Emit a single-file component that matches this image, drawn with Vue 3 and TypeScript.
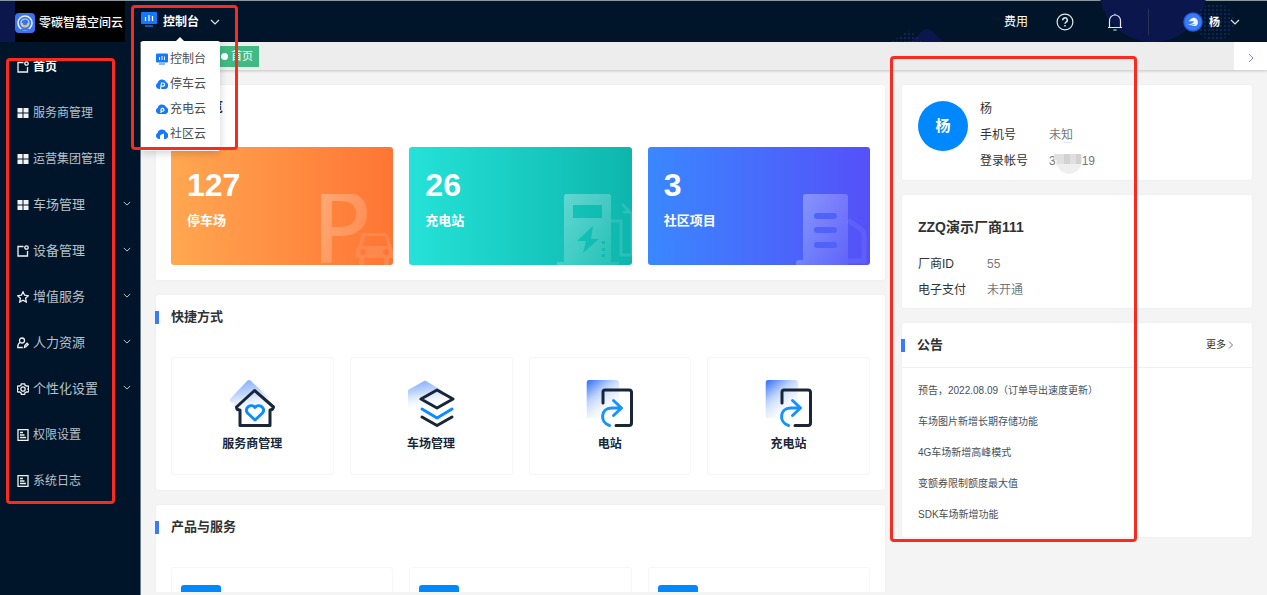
<script setup lang="ts">
import { ref } from 'vue'

interface NavItem { label: string; icon: string; large?: boolean; expandable?: boolean; active?: boolean }

const navItems: NavItem[] = [
  { label: '首页', icon: 'page', active: true },
  { label: '服务商管理', icon: 'grid' },
  { label: '运营集团管理', icon: 'grid' },
  { label: '车场管理', icon: 'grid', large: true, expandable: true },
  { label: '设备管理', icon: 'page', large: true, expandable: true },
  { label: '增值服务', icon: 'star', large: true, expandable: true },
  { label: '人力资源', icon: 'user', large: true, expandable: true },
  { label: '个性化设置', icon: 'gear', large: true, expandable: true },
  { label: '权限设置', icon: 'doc' },
  { label: '系统日志', icon: 'doc' },
]

const platforms = [
  { label: '控制台', icon: 'monitor' },
  { label: '停车云', icon: 'parking' },
  { label: '充电云', icon: 'charge' },
  { label: '社区云', icon: 'community' },
]

const stats = [
  { value: 127, label: '停车场', kind: 'parking' },
  { value: 26, label: '充电站', kind: 'charging' },
  { value: 3, label: '社区项目', kind: 'community' },
]

const shortcuts = [
  { label: '服务商管理', icon: 'house' },
  { label: '车场管理', icon: 'layers' },
  { label: '电站', icon: 'share' },
  { label: '充电站', icon: 'share' },
]

const notices = [
  '预告，2022.08.09（订单导出速度更新）',
  '车场图片新增长期存储功能',
  '4G车场新增高峰模式',
  '变额券限制额度最大值',
  'SDK车场新增功能',
]

const menuOpen = ref(true)
</script>

<template>
  <div class="app">
    <header class="header">
      <svg class="decor" viewBox="0 0 380 42" aria-hidden="true">
        <defs>
          <pattern id="dots" width="4" height="4" patternUnits="userSpaceOnUse">
            <circle cx="2" cy="2" r="1" fill="#12296b" />
          </pattern>
        </defs>
        <circle cx="266" cy="-12" r="54" fill="#0b174c" />
        <path d="M22 42C32 38 33 29 40 29S49 38 58 42Z" fill="#0b174c" />
        <path d="M4 42 22 30 36 42Z" fill="url(#dots)" />
        <circle cx="328" cy="22" r="19" fill="url(#dots)" />
      </svg>
      <div class="brand">
        <svg class="brand-logo" viewBox="0 0 20 20" aria-hidden="true">
          <rect width="20" height="20" rx="4" fill="#3b73ee" />
          <circle cx="10" cy="10" r="7" fill="none" stroke="#e8f0ff" stroke-width="1.6" />
          <circle cx="10" cy="10" r="4" fill="none" stroke="#c8d9fb" stroke-width="1.2" />
          <path d="M7 10a3 3 0 0 0 6 0" fill="none" stroke="#e9c84c" stroke-width="1.6" />
          <path d="M6 16.5h8" stroke="#3b73ee" stroke-width="2" />
        </svg>
        <span>零碳智慧空间云</span>
      </div>
      <div class="switcher">
        <button class="switch-button" type="button" :aria-expanded="menuOpen" @click="menuOpen = !menuOpen">
          <svg class="monitor" viewBox="0 0 16 15" aria-hidden="true">
            <rect width="16" height="12" rx="1" fill="#1677ff" />
            <path d="M4.500 5v4M8 3v6M11.500 4v5" stroke="#fff" stroke-width="1.2" />
            <path d="M4 14h8" stroke="#1677ff" stroke-width="1.4" />
          </svg>
          <span>控制台</span>
          <svg class="chevron" viewBox="0 0 10 6" aria-hidden="true"><path d="m1 1 4 4 4-4" /></svg>
        </button>
        <ul v-if="menuOpen" class="menu">
          <li v-for="p in platforms" :key="p.label">
            <a href="#">
              <svg viewBox="0 0 12 12" aria-hidden="true">
                <template v-if="p.icon === 'monitor'">
                  <rect y="0.500" width="12" height="9" rx="1" fill="#1677ff" />
                  <path d="M3.500 4v3M6 3v4M8.500 3.500V7" stroke="#fff" />
                  <path d="M3 11h6" stroke="#1677ff" />
                </template>
                <template v-else>
                  <path d="M3 11A3.200 3.200 0 0 1 1.600 5a4.600 4.600 0 0 1 8.700-.7A3.600 3.600 0 0 1 9.500 11Z" fill="#1677ff" />
                  <path v-if="p.icon === 'parking'" d="M4.500 11 5.500 5H7a1.600 1.600 0 0 1 0 3.200H5" fill="none" stroke="#fff" stroke-width="1.200" />
                  <path v-else-if="p.icon === 'charge'" d="M5 10V7a1.500 1.500 0 1 1 2 1.200L5 8.500" fill="none" stroke="#fff" stroke-width="1.200" />
                  <path v-else d="M4.500 12V7.500L7.500 6v6" fill="#fff" stroke="#fff" stroke-width="1" />
                </template>
              </svg>
              <span>{{ p.label }}</span>
            </a>
          </li>
        </ul>
      </div>
      <div class="tools">
        <a class="fee" href="#">费用</a>
        <button class="tool help" type="button" aria-label="帮助">
          <svg viewBox="0 0 18 18" fill="none" stroke="#e4e8ed" stroke-width="1.2">
            <circle cx="9" cy="9" r="7.900" />
            <path d="M6.700 7.300a2.300 2.300 0 1 1 3.200 2C9.200 9.700 9 10 9 10.800M9 12v1.400" stroke-width="1.500" />
          </svg>
        </button>
        <button class="tool bell" type="button" aria-label="通知">
          <svg viewBox="0 0 18 18" fill="none" stroke="#e4e8ed" stroke-width="1.2">
            <path d="M2 14.500h14M3.500 14.500V7.500a5.500 5.500 0 0 1 11 0v7M9 2V.800M7.300 17h3.400" />
          </svg>
        </button>
        <span class="divider"></span>
        <button class="account" type="button">
          <svg class="account-avatar" viewBox="0 0 20 20" aria-hidden="true">
            <circle cx="10" cy="10" r="9.800" fill="#2458cf" />
            <circle cx="10" cy="10" r="8.500" fill="#3a7bf7" />
            <path d="M5.500 9.500C8 5.500 12 4.500 14 7.500c2 3.500.5 6.500-2 6.500H5c3 0 6-.500 7-2-2 .800-5 .800-7 .500 3-.500 5.500-1.500 6-3-2-.500-4-.500-5.500 0Z" fill="#eef5ff" />
          </svg>
          <span>杨</span>
          <svg class="chevron" viewBox="0 0 10 6" aria-hidden="true"><path d="m1 1 4 4 4-4" /></svg>
        </button>
      </div>
    </header>

    <div class="body">
      <nav class="sidebar">
        <ul class="nav-list">
          <li v-for="item in navItems" :key="item.label">
            <a href="#" :class="{ large: item.large, active: item.active }">
              <svg class="nav-icon" viewBox="0 0 12 12" fill="none" stroke="currentColor" stroke-width="1.300" aria-hidden="true">
                <path v-if="item.icon === 'grid'" d="M.5 1h5v4.500h-5ZM6.500 1h5v4.500h-5ZM.5 6.500h5V11h-5ZM6.500 6.500h5V11h-5Z" fill="currentColor" stroke="none" />
                <template v-else-if="item.icon === 'page'">
                  <path d="M6.500 1.500H1v9.500h9.500V6" />
                  <circle cx="9.500" cy="2.500" r="1.700" />
                </template>
                <path v-else-if="item.icon === 'star'" d="m6 .8 1.600 3.400 3.700.5-2.700 2.600.7 3.700L6 9.200 2.700 11l.7-3.700L.7 4.700l3.700-.5Z" />
                <template v-else-if="item.icon === 'user'">
                  <circle cx="5" cy="3.500" r="2.500" />
                  <path d="M3 5.500C1 6.500.7 8 .8 10.500h5M7.500 10.500l.3-2 2.200-2.300 1.200 1.200-2.200 2.400Z" />
                </template>
                <template v-else-if="item.icon === 'gear'">
                  <path d="m4.400.8-.5 1.500-1.500.8L.8 3 .1 5l1 1-1 1.200.9 1.900 1.500-.1 1.400.8.5 1.500h3.200l.5-1.500L9.500 9l1.500.1.9-1.900-1-1.200 1-1-.7-2-1.600.1-1.500-.8L7.600.8Z" />
                  <circle cx="6" cy="6" r="2.200" />
                </template>
                <path v-else d="M1 .7h10v10.600H1ZM3 3.500h3M3 6h4.500M3 8.500h6" />
              </svg>
              <span>{{ item.label }}</span>
              <svg v-if="item.expandable" class="chevron arrow" viewBox="0 0 10 6" aria-hidden="true"><path d="m1 1 4 4 4-4" /></svg>
            </a>
          </li>
        </ul>
      </nav>

      <main class="main">
        <div class="tabs">
          <a class="tab" href="#"><i></i>首页</a>
          <button class="tabs-next" type="button" aria-label="下一页">
            <svg viewBox="0 0 6 10"><path d="m1 1 4 4-4 4" fill="none" stroke="#6d8df5" /></svg>
          </button>
        </div>

        <div class="content">
          <div class="column">
            <section class="card">
              <h2 class="card-title">数据概览</h2>
              <div class="grid three">
                <a v-for="s in stats" :key="s.label" href="#" class="stat" :class="s.kind">
                  <strong>{{ s.value }}</strong>
                  <span>{{ s.label }}</span>
                  <svg class="stat-art" viewBox="0 0 80 71" aria-hidden="true">
                    <defs>
                      <linearGradient :id="'art-' + s.kind" x1="0" y1="0" x2="1" y2="1">
                        <stop offset="0" stop-color="#fff" stop-opacity=".34" />
                        <stop offset="1" stop-color="#fff" stop-opacity=".08" />
                      </linearGradient>
                    </defs>
                    <g v-if="s.kind === 'parking'">
                      <text class="art-letter" x="-1" y="69" fill="url(#art-parking)">P</text>
                      <path d="M50 39h21q3 0 4 3l3 9q2 3 2 7v6h-4v7h-5v-7H51v7h-5v-7h-3v-7q0-4 3-6l2-9q0-3 2-3ZM52 42l-3 10h26l-3-10ZM50 55a3 3 0 1 0 .1 6 3 3 0 0 0-.1-6ZM73 55a3 3 0 1 0 .1 6 3 3 0 0 0-.1-6Z" fill="#ff8f58" fill-opacity=".7" fill-rule="evenodd" />
                    </g>
                    <g v-else-if="s.kind === 'charging'" fill="url(#art-charging)">
                      <path d="M14 0h43q2 0 2 2v66h8v3H5v-3h7V2q0-2 2-2ZM21 11v13h29V11ZM41 32 25 47h9l-3 12 16-14h-8ZM50 47v3h3v-3ZM50 54v3h3v-3ZM50 60v3h3v-3Z" fill-rule="evenodd" />
                      <path d="M59 27h10v34h11V20l-10-10M71 18h8" fill="none" stroke="#fff" stroke-opacity=".12" stroke-width="3" />
                    </g>
                    <g v-else>
                      <path d="M16 0h39q3 0 3 3v68H6v-2q0-3 3-3h4V3q0-3 3-3Z" fill="url(#art-community)" />
                      <path d="M58 26 72 36q2 2 2 4v27H58" fill="none" stroke="#fff" stroke-opacity=".07" stroke-width="5" />
                      <path d="M27 22h17M27 36h17M27 51h17" stroke="#4f63fa" stroke-width="6" stroke-linecap="round" />
                    </g>
                  </svg>
                </a>
              </div>
            </section>

            <section class="card">
              <h2 class="card-title marked">快捷方式</h2>
              <div class="grid four">
                <a v-for="(t, i) in shortcuts" :key="t.label" href="#" class="tile">
                  <svg viewBox="0 0 48 48" fill="none" stroke="#182637" stroke-width="3" stroke-linecap="round" stroke-linejoin="round" aria-hidden="true">
                    <defs>
                      <linearGradient :id="'tile-' + i" x1="0" y1="0" :x2="t.icon === 'share' ? 0.7 : 0.2" y2="1">
                        <stop offset="0" :stop-color="t.icon === 'share' ? '#2f6df6' : '#7aa9fb'" />
                        <stop offset=".4" stop-color="#bcd3fd" />
                        <stop offset="1" stop-color="#fff" stop-opacity="0" />
                      </linearGradient>
                    </defs>
                    <template v-if="t.icon === 'house'">
                      <path d="M19 1q2-2 4 0l17 16q2 3-1 4v17H6V23H4q-4-2-1-5Z" :fill="`url(#tile-${i})`" stroke="none" />
                      <path d="M26.500 10.500 8.500 27q0 3 3.500 3v15.500h30V30q3 0 3.500-3Z" />
                      <path d="M27 40 19.500 33c-4-5 3.500-10 7.500-5.500 4-4.500 11.500.5 7.500 5.500Z" stroke="#0b8cff" />
                    </template>
                    <template v-else-if="t.icon === 'layers'">
                      <path d="M1 10 18 .5 36 11v20H1Z" :fill="`url(#tile-${i})`" stroke="none" />
                      <path d="m14 19 16-9 16 9-16 9Z" />
                      <path d="m15 29 15 9 15-9" stroke="#0b8cff" />
                      <path d="m15 37 15 8.500L45 37" />
                    </template>
                    <template v-else>
                      <path d="M3 0h27q3 0 3 3v35H.7V3Q.7 0 3 0Z" :fill="`url(#tile-${i})`" stroke="none" />
                      <path d="M17 23V12q0-2 2-2h24q2.500 0 2.500 2.500V43q0 2.500-2.500 2.500H30" />
                      <path d="M23.500 45.500c-10-3-9-17.500 2-17.500H35M27.500 20.500 35.500 28l-8 7.500" stroke="#1593ff" />
                    </template>
                  </svg>
                  <span>{{ t.label }}</span>
                </a>
              </div>
            </section>

            <section class="card">
              <h2 class="card-title marked">产品与服务</h2>
              <div class="grid three">
                <div v-for="n in 3" :key="n" class="product"><i></i></div>
              </div>
            </section>
          </div>

          <aside class="column">
            <section class="card profile">
              <div class="avatar">杨</div>
              <div>
                <div class="name">杨</div>
                <dl class="rows">
                  <dt>手机号</dt><dd>未知</dd>
                  <dt>登录帐号</dt>
                  <dd class="masked">
                    <span>3</span>
                    <svg viewBox="0 0 30 32" aria-hidden="true">
                      <path d="M9 1q6-3 11 0Z" fill="#e4e4e5" />
                      <path d="M2 12h27v8q0 3-1 4-5 8-12 8T4 24Q0 18 2 12Z" fill="#efeff0" />
                      <path d="M1 12h27v10H4V18H1Z" fill="#e0e0e1" />
                      <path d="M11 12h6v10h-6ZM23 12h5v10h-5Z" fill="#d2d2d4" />
                    </svg>
                    <span>19</span>
                  </dd>
                </dl>
              </div>
            </section>

            <section class="card vendor">
              <h2>ZZQ演示厂商111</h2>
              <dl class="rows">
                <dt>厂商ID</dt><dd>55</dd>
                <dt>电子支付</dt><dd>未开通</dd>
              </dl>
            </section>

            <section class="card">
              <div class="notice-head">
                <h2 class="card-title marked">公告</h2>
                <a class="more" href="#">更多<svg viewBox="0 0 6 10" aria-hidden="true"><path d="m1 1.500 3.500 3.500L1 8.500" fill="none" stroke="#6b7280" /></svg></a>
              </div>
              <ul class="notices">
                <li v-for="n in notices" :key="n"><a href="#">{{ n }}</a></li>
              </ul>
            </section>
          </aside>
        </div>
      </main>
    </div>

    <div class="highlight highlight-nav"></div>
    <div class="highlight highlight-menu"></div>
    <div class="highlight highlight-side"></div>
  </div>
</template>

<style>
body { margin: 0; }
</style>

<style scoped>
.app, .app * { box-sizing: border-box; }
.app {
  position: relative;
  display: flex;
  flex-direction: column;
  height: 100vh;
  overflow: hidden;
  background: #f4f4f5;
  color: #303133;
  font: 12px/16px "Liberation Sans", "Noto Sans CJK SC", sans-serif;
}
a { color: inherit; text-decoration: none; }
button { padding: 0; border: 0; background: none; color: inherit; font: inherit; cursor: pointer; }
ul, dl, dd, h2 { margin: 0; padding: 0; list-style: none; }
svg { display: block; flex: none; }
.chevron { width: 10px; height: 6px; fill: none; stroke: #dfe4ea; stroke-width: 1.2; }

.header {
  position: relative;
  z-index: 2;
  display: flex;
  flex: none;
  height: 42px;
  padding-left: 15px;
  border-top: 1px solid #8b979f;
  background: linear-gradient(90deg, #0b174c 15px, #001529 15px);
  color: #fff;
}
.decor { position: absolute; top: -1px; right: 0; width: 380px; height: 42px; }
.brand { display: flex; align-items: center; gap: 4px; width: 110px; padding-top: 2px; background: #000; font-weight: 500; white-space: nowrap; }
.brand-logo { width: 20px; height: 20px; }
.switcher { position: relative; display: flex; margin-left: 16px; }
.switch-button { display: flex; align-items: center; gap: 6px; font-weight: 700; }
.switch-button .chevron { margin-left: 5px; }
.monitor { width: 16px; height: 15px; margin-bottom: 4px; }
.menu {
  position: absolute;
  top: 40px;
  left: 0;
  width: 79px;
  padding: 5px 0;
  border-radius: 2px;
  background: #fff;
  box-shadow: 0 2px 8px rgba(0, 0, 0, .18);
  color: #4a4d52;
}
.menu::before { content: ""; position: absolute; top: -4px; left: 35px; border: 4px solid transparent; border-top: 0; border-bottom-color: #fff; }
.menu a { display: flex; align-items: center; gap: 2px; height: 25px; padding-left: 15px; }
.menu svg { width: 12px; height: 12px; }

.tools { position: relative; display: flex; align-items: center; margin-left: auto; padding-right: 27px; }
.fee { margin-right: 28px; }
.tool svg { width: 18px; height: 18px; }
.help { margin-right: 32px; }
.bell { margin-right: 24px; }
.divider { width: 1px; height: 26px; margin-right: 34px; background: #2b3457; }
.account { display: flex; align-items: center; font-size: 11px; font-weight: 700; }
.account-avatar { width: 20px; height: 20px; margin-right: 6px; }
.account .chevron { margin-left: 10px; }

.body { display: flex; flex: 1; min-height: 0; }
.sidebar { flex: none; width: 141px; padding-top: 19px; border-right: 1px solid #6d7a88; background: #001529; color: #b9c1c9; }
.nav-list { height: 100%; overflow: hidden; }
.nav-list li:first-child { margin-top: -17px; }
.nav-list a { display: flex; align-items: center; gap: 4px; height: 46px; padding: 0 9px 0 17px; white-space: nowrap; }
.nav-list a.large { font-size: 13px; }
.nav-list a.active { color: #fff; font-weight: 700; }
.nav-icon { width: 12px; height: 12px; color: #f1f3f5; }
.arrow { width: 8px; height: 5px; margin-bottom: 3px; margin-left: auto; stroke: #c6cdd4; }

.main { display: flex; flex: 1; flex-direction: column; min-width: 0; padding-bottom: 3px; }
.tabs { display: flex; flex: none; align-items: center; height: 28px; padding-left: 73px; background: #ededed; box-shadow: 0 1px 3px rgba(0, 0, 0, .2); }
.tab { display: flex; align-items: center; gap: 3px; height: 21px; padding: 0 6px 0 7px; background: #42b983; color: #fff; font-size: 11px; }
.tab i { width: 7px; height: 7px; border-radius: 50%; background: #fff; }
.tabs-next { display: flex; align-items: center; justify-content: center; width: 33px; height: 28px; padding-top: 4px; margin-left: auto; background: #fff; }
.tabs-next svg { width: 6px; height: 10px; }

.content { display: grid; flex: 1; grid-template-columns: 731fr 352fr; gap: 15px; min-height: 0; padding: 14px 14px 0; overflow: hidden; }
.column { display: flex; flex-direction: column; gap: 13px; min-width: 0; }
.card { flex: none; border: 1px solid #f0f0f3; border-radius: 3px; background: #fff; }
.card-title { position: relative; padding-left: 15px; font-size: 13px; font-weight: 700; line-height: 44px; }
.marked::before { content: ""; position: absolute; top: 16px; left: -1px; width: 4px; height: 13px; background: #3a7afe; }
.grid { display: grid; gap: 16px; padding: 18px 15px 15px; }
.three { grid-template-columns: repeat(3, 1fr); }
.four { grid-template-columns: repeat(4, 1fr); }

.stat { position: relative; display: flex; flex-direction: column; height: 118px; padding: 20px 16px; border-radius: 3px; color: #fff; overflow: hidden; }
.stat strong { font-size: 32px; line-height: 36px; }
.stat span { margin-top: 8px; font-size: 13px; font-weight: 700; line-height: 20px; }
.stat-art { position: absolute; right: 0; bottom: 0; width: 80px; height: 71px; }
.art-letter { font: 500 98px "Noto Sans", sans-serif; }
.parking { background: linear-gradient(90deg, #ffa751, #ff7534); }
.charging { background: linear-gradient(90deg, #25e2d8, #0db6ac); }
.community { background: linear-gradient(90deg, #3a88ff, #5550f8); }

.tile { display: flex; flex-direction: column; align-items: center; height: 118px; padding-top: 22px; border: 1px solid #f6f6f8; border-radius: 3px; color: #182637; font-weight: 700; }
.tile svg { width: 48px; height: 48px; margin-bottom: 8px; }
.product { height: 118px; padding: 17px 9px; border: 1px solid #f6f6f8; border-radius: 3px; }
.product i { display: block; width: 40px; height: 40px; border-radius: 3px; background: #0089ff; }

.profile { display: flex; gap: 12px; padding: 11px 16px 6px; }
.avatar { flex: none; width: 50px; height: 50px; margin-top: 5px; border-radius: 50%; background: #0089ff; color: #fff; font-size: 15px; font-weight: 700; line-height: 50px; text-align: center; }
.name { line-height: 26px; }
.rows { display: grid; grid-template-columns: 69px 1fr; line-height: 26px; }
.rows dd { color: #74777c; }
.masked { position: relative; display: flex; gap: 26px; height: 26px; }
.masked svg { position: absolute; top: -6px; left: 4px; width: 30px; height: 32px; }
.vendor { padding: 19px 16px 5px; }
.vendor h2 { margin-bottom: 11px; font-size: 14px; line-height: 26px; }
.notice-head { display: flex; align-items: center; justify-content: space-between; border-bottom: 1px solid #eff0f4; }
.more { display: flex; align-items: center; gap: 2px; margin-right: 18px; font-size: 10px; }
.more svg { width: 6px; height: 10px; }
.notices { padding: 7px 16px; color: #4a4f57; font-size: 10px; line-height: 31px; }

.highlight { position: absolute; z-index: 3; border: 3px solid #fb2a1e; border-radius: 4px; pointer-events: none; }
.highlight-nav { top: 58px; left: 6px; width: 109px; height: 446px; }
.highlight-menu { top: 5px; left: 131px; width: 107px; height: 145px; }
.highlight-side { top: 56px; left: 890px; width: 247px; height: 486px; }
</style>
